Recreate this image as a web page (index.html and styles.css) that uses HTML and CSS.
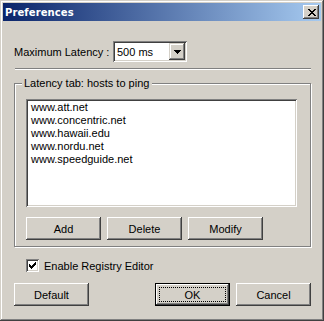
FILE: index.html
```html
<!DOCTYPE html>
<html lang="en">
<head>
  <meta charset="UTF-8">
  <title>Preferences</title>
  <link rel="stylesheet" href="styles.css">
</head>
<body>
  <div class="window">
    <div class="titlebar">
      <span class="title">Preferences</span>
      <button class="close" aria-label="Close">
        <svg width="8" height="7" viewBox="0 0 8 7" shape-rendering="crispEdges">
          <path d="M0 0h2v1H0z M6 0h2v1H6z M1 1h2v1H1z M5 1h2v1H5z M2 2h4v1H2z M3 3h2v1H3z M2 4h4v1H2z M1 5h2v1H1z M5 5h2v1H5z M0 6h2v1H0z M6 6h2v1H6z" fill="#000"/>
        </svg>
      </button>
    </div>

    <div class="content">
      <!-- latency select -->
      <div class="latency-row">
        <span class="latency-label">Maximum Latency :</span>
        <div class="combo">
          <span class="combo-value">500 ms</span>
          <span class="combo-btn">
            <svg width="7" height="4" viewBox="0 0 7 4" shape-rendering="crispEdges">
              <path d="M0 0h7v1H0z M1 1h5v1H1z M2 2h3v1H2z M3 3h1v1H3z" fill="#000"/>
            </svg>
          </span>
        </div>
      </div>

      <div class="separator"></div>

      <fieldset class="group">
        <legend>Latency tab: hosts to ping</legend>
        <ul class="hosts">
          <li>www.att.net</li>
          <li>www.concentric.net</li>
          <li>www.hawaii.edu</li>
          <li>www.nordu.net</li>
          <li>www.speedguide.net</li>
        </ul>
        <div class="group-buttons">
          <button class="btn">Add</button>
          <button class="btn">Delete</button>
          <button class="btn">Modify</button>
        </div>
      </fieldset>

      <label class="check-row">
        <span class="checkbox">
          <svg width="7" height="7" viewBox="0 0 7 7" shape-rendering="crispEdges">
            <path d="M6 0h1v1H6z M5 1h2v1H5z M0 2h1v1H0z M4 2h3v1H4z M0 3h2v1H0z M3 3h3v1H3z M0 4h5v1H0z M1 5h3v1H1z M2 6h1v1H2z" fill="#000"/>
          </svg>
        </span>
        Enable Registry Editor
      </label>

      <div class="dialog-buttons">
        <button class="btn">Default</button>
        <div class="confirm">
          <button class="btn btn-default">OK</button>
          <button class="btn">Cancel</button>
        </div>
      </div>
    </div>
  </div>
</body>
</html>
```

FILE: styles.css
```css
/* General */
* {
  box-sizing: border-box;
  margin: 0;
  padding: 0;
}

body {
  font-family: "Liberation Sans", Arial, sans-serif;
  font-size: 11px;
  color: #000;
  background: #d4d0c8;
}

/* Window frame */
.window {
  width: 324px;
  height: 321px;
  padding: 3px;
  background: #d4d0c8;
  box-shadow: inset -1px -1px #404040, inset 1px 1px #d4d0c8,
              inset -2px -2px #808080, inset 2px 2px #fff;
}

.titlebar {
  height: 18px;
  display: flex;
  align-items: center;
  justify-content: space-between;
  padding: 0 2px 0 2px;
  background: linear-gradient(to right, #0a246a, #a6caf0);
}

.title {
  font-family: "DejaVu Sans", Verdana, sans-serif;
  font-weight: bold;
  font-size: 10px;
  color: #fff;
  letter-spacing: 0.1px;
}

.close {
  width: 16px;
  height: 14px;
  border: none;
  background: #d4d0c8;
  display: flex;
  align-items: center;
  justify-content: center;
  padding-left: 1px;
  box-shadow: inset -1px -1px #404040, inset 1px 1px #fff,
              inset -2px -2px #808080, inset 2px 2px #d4d0c8;
}

/* Content */
.content {
  padding: 20px 10px 0 11px;
}

.latency-row {
  display: flex;
  align-items: center;
  height: 21px;
}

.latency-label {
  width: 99px;
}

.combo {
  width: 74px;
  height: 21px;
  display: flex;
  align-items: center;
  justify-content: space-between;
  padding: 2px;
  background: #fff;
  box-shadow: inset 1px 1px #808080, inset -1px -1px #fff,
              inset 2px 2px #404040, inset -2px -2px #d4d0c8;
}

.combo-value {
  padding-left: 2px;
}

.combo-btn {
  width: 16px;
  height: 17px;
  display: flex;
  align-items: center;
  justify-content: center;
  background: #d4d0c8;
  box-shadow: inset -1px -1px #404040, inset 1px 1px #d4d0c8,
              inset -2px -2px #808080, inset 2px 2px #fff;
}

.separator {
  height: 2px;
  margin: 6px 0 0 1px;
  border-top: 1px solid #808080;
  border-bottom: 1px solid #fff;
}

/* Group box */
.group {
  margin-top: 7px;
  padding: 9px 11px 6px 11px;
  border: 1px solid #808080;
  box-shadow: inset 1px 1px #fff, 1px 1px #fff;
}

.group legend {
  margin-left: -4px;
  padding: 0 3px 0 2px;
  line-height: 13px;
  background: #d4d0c8;
}

.hosts {
  list-style: none;
  width: 271px;
  height: 108px;
  padding: 2px 5px;
  background: #fff;
  line-height: 13px;
  box-shadow: inset 1px 1px #808080, inset -1px -1px #fff,
              inset 2px 2px #404040, inset -2px -2px #d4d0c8;
}

.group-buttons {
  display: flex;
  gap: 6px;
  margin-top: 10px;
}

/* Buttons */
.btn {
  width: 75px;
  height: 23px;
  border: none;
  background: #d4d0c8;
  font-family: "Liberation Sans", Arial, sans-serif;
  font-size: 11px;
  color: #000;
  box-shadow: inset -1px -1px #404040, inset 1px 1px #fff,
              inset -2px -2px #808080, inset 2px 2px #d4d0c8;
}

.btn-default {
  border: 1px solid #000;
  outline: 1px dotted #000;
  outline-offset: -5px;
}

/* Checkbox */
.check-row {
  display: flex;
  align-items: center;
  gap: 5px;
  margin-top: 12px;
  height: 13px;
  padding-left: 12px;
}

.checkbox {
  width: 13px;
  height: 13px;
  padding: 3px;
  background: #fff;
  box-shadow: inset 1px 1px #808080, inset -1px -1px #fff,
              inset 2px 2px #404040, inset -2px -2px #d4d0c8;
}

.checkbox svg {
  display: block;
}

.dialog-buttons {
  display: flex;
  justify-content: space-between;
  margin-top: 11px;
}

.confirm {
  display: flex;
  gap: 6px;
}
```
